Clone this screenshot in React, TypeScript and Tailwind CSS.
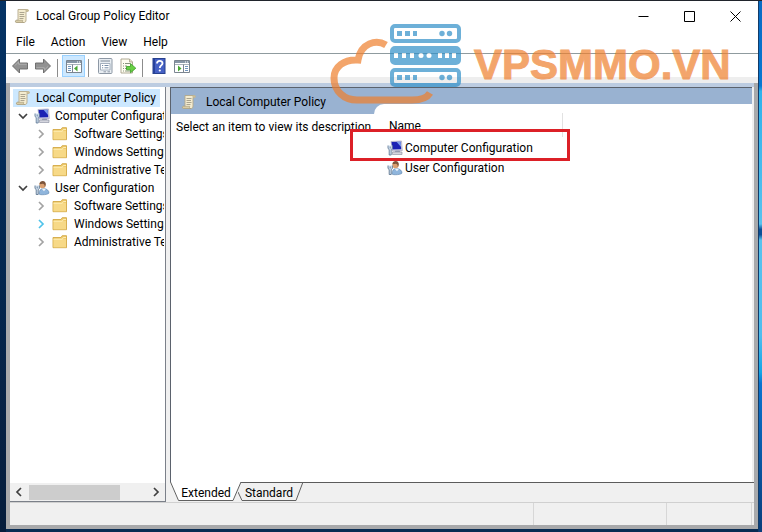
import { useState } from 'react';
import type { ReactNode } from 'react';

interface TreeGroup {
  name: string;
  kind: 'computer' | 'user';
  children: string[];
}

const folders = ['Software Settings', 'Windows Settings', 'Administrative Templates'];

const groups: TreeGroup[] = [
  { name: 'Computer Configuration', kind: 'computer', children: folders },
  { name: 'User Configuration', kind: 'user', children: folders },
];

function ScrollIcon() {
  return (
    <svg className="size-4 shrink-0" viewBox="0 0 16 16" aria-hidden="true">
      <path d="M4 1.500h9.500c1.200 0 1.400 2 0 2H12V12c0 1.800-.8 2.500-2 2.500H2.500c-1.300 0-1.500-2 0-2.200H4z" fill="#f4ecd0" stroke="#b3a88a" strokeWidth=".9" />
      <path d="M12 3.500c-.8-.2-.8-1.600 0-2h1.500c1.200 0 1.400 2 0 2z" fill="#c9bd97" />
      <path d="M2.500 12.300h6.300c-.7.800-.3 2 .7 2.200h-7c-1.200 0-1.500-2 0-2.200z" fill="#d9cda8" stroke="#a59a7c" strokeWidth=".6" />
      <path d="M5.500 4.500h5M5.500 6.500h4.500M5.500 8.500h5M5.500 10.500h4" stroke="#a39c88" strokeWidth=".9" />
    </svg>
  );
}

function FolderIcon() {
  return (
    <svg className="size-4 shrink-0" viewBox="0 0 16 16" aria-hidden="true">
      <path d="M1 3.500h8l1.200-1.800h4.300v12H1z" fill="#efcb6b" stroke="#d3a846" strokeWidth=".9" />
      <path d="M1.500 5h12.500v8.300H1.500z" fill="#f7d987" />
      <path d="M1.500 5.200h8.800l1-1.700h2.700" fill="none" stroke="#fff0bd" strokeWidth=".9" />
    </svg>
  );
}

function ComputerIcon() {
  return (
    <svg className="size-4 shrink-0" viewBox="0 0 16 16" aria-hidden="true">
      <path d="M4 1.500l10.500-.5.8 9.500L5.500 11z" fill="#dcdcea" stroke="#a3a3bd" strokeWidth=".7" />
      <path d="M4.500 2l9.200-.3.500 7.600L5.500 9.500z" fill="#1a22b4" />
      <path d="M9.500 1.800l4.200-.1.400 5.300z" fill="#7b9bea" />
      <path d="M8.500 10.500h4l1 1.700H7.500z" fill="#9ba0b8" />
      <path d="M5.500 12h9.500v2.500H5.500z" fill="#d5d6df" stroke="#85899c" strokeWidth=".6" />
      <path d="M1 5.500v3l1.200 1v5.500h2V9.500l1.200-1v-3M3.200 6.500v2" fill="#d4e2f1" stroke="#55718f" strokeWidth=".8" />
    </svg>
  );
}

function UserIcon() {
  return (
    <svg className="size-4 shrink-0" viewBox="0 0 16 16" aria-hidden="true">
      <path d="M5 14c0-3.500 1.500-5.500 4.500-5.500S15 10.500 15 13c0 1.500-9 2.500-10 1z" fill="#8fb5dc" stroke="#5d83ab" strokeWidth=".6" />
      <path d="M7.500 8.500l2.500 2.800 2-2.500z" fill="#eef4fa" />
      <circle cx="8.500" cy="5" r="3.200" fill="#dba070" />
      <path d="M5.500 4.200C5.500 2 7 1 8.700 1c2 0 3.300 1.500 3 4l-1 2.200c.2-2-.4-3-1.700-3.400z" fill="#7c543a" />
      <path d="M1 5.500v3l1.200 1v5h2v-5l1.200-1v-3M3.200 6.500v2" fill="#d4e2f1" stroke="#4d6884" strokeWidth=".8" />
    </svg>
  );
}

function Chevron({ dir, className }: { dir: 'down' | 'left' | 'right'; className: string }) {
  const paths = { down: 'M2 4l4 4 4-4', left: 'M8 2L4 6l4 4', right: 'M4 2l4 4-4 4' };
  return (
    <svg className={`size-3 ${className}`} viewBox="0 0 12 12" fill="none" stroke="currentColor" aria-hidden="true">
      <path d={paths[dir]} strokeWidth="1.700" />
    </svg>
  );
}

function ArrowIcon({ flip }: { flip?: boolean }) {
  return (
    <svg className={flip ? 'size-4 rotate-180' : 'size-4'} viewBox="0 0 16 16" aria-hidden="true">
      <path d="M.5 8L7.500 1v4h8v6h-8v4z" fill="#929292" stroke="#666" strokeWidth=".9" />
      <path d="M3 7.500L6.700 3.800v2.400h8" fill="none" stroke="#b9b9b9" strokeWidth=".8" />
    </svg>
  );
}

function PaneIcon({ side }: { side: 'left' | 'right' }) {
  return (
    <svg className="size-4" viewBox="0 0 16 16" aria-hidden="true">
      <path d="M.5 2.500h15v12H.5z" fill="#fff" stroke="#7b8590" />
      <path d="M1 3h14v2H1z" fill="#8796a6" />
      <path d="M11 4h1M13 4h1" stroke="#fff" />
      <path d="M1 6.500h14" stroke="#aab3bc" />
      {side === 'left' ? (
        <>
          <path d="M6.500 6.500v8" stroke="#7b8590" />
          <path d="M2 8.500h3M2 10.500h3M2 12.500h3" stroke="#7195bd" />
          <path d="M11.500 7.500v6L8 10.500z" fill="#49a832" />
        </>
      ) : (
        <>
          <path d="M9.500 6.500v8" stroke="#7b8590" />
          <path d="M11 8.500h3M11 10.500h3M11 12.500h3" stroke="#7195bd" />
          <path d="M4 7.500v6l3.500-3z" fill="#49a832" />
        </>
      )}
    </svg>
  );
}

function PropertiesIcon() {
  return (
    <svg className="size-4" viewBox="0 0 16 16" aria-hidden="true">
      <rect x="1.500" y=".5" width="13.500" height="15" rx="1" fill="#e8edf2" stroke="#8d98a5" />
      <path d="M3.500 3h9.500" stroke="#7c8896" />
      <path d="M3.500 5.500h9.500v6.500H3.500z" fill="#fff" stroke="#91a0b0" strokeWidth=".8" />
      <path d="M5 7.500h1.200M7.500 7.500h4M5 9.800h1.200M7.500 9.800h4" stroke="#768ca6" />
      <path d="M6.500 13.800h2.500M10.500 13.800h2.500" stroke="#8d98a5" />
    </svg>
  );
}

function ExportIcon() {
  return (
    <svg className="size-4" viewBox="0 0 16 16" aria-hidden="true">
      <path d="M1 1h8.500l3 3v11H1z" fill="#fffdf0" stroke="#a7a28a" strokeWidth=".9" />
      <path d="M9.500 1v3h3" fill="#e4dfc6" stroke="#a7a28a" strokeWidth=".8" />
      <path d="M3 5.500h1M5 5.500h5M3 8h1M5 8h2M3 10.500h1M5 10.500h2M3 13h1M5 13h5" stroke="#7c8a72" strokeWidth=".9" />
      <path d="M6.500 8.500h4V5.500L15.800 10.200l-5.300 4.600v-3h-4z" fill="#68cf43" stroke="#399c24" strokeWidth=".8" />
    </svg>
  );
}

function HelpIcon() {
  return (
    <svg className="size-4" viewBox="0 0 16 16" aria-hidden="true">
      <rect x="2" y=".5" width="12" height="15" fill="#4560c4" stroke="#27418e" />
      <path d="M2 1h2v14H2z" fill="#28429b" />
      <path d="M6 5.500c0-3.500 5.500-3.300 5.500-.3 0 2.300-2.700 2.200-2.700 4.800" fill="none" stroke="#fff" strokeWidth="1.800" />
      <circle cx="8.800" cy="12.500" r="1.100" fill="#fff" />
    </svg>
  );
}

function ToolButton({ label, active, children }: { label: string; active?: boolean; children: ReactNode }) {
  return (
    <button
      aria-label={label}
      className={`flex h-[22px] w-[23px] items-center justify-center border ${active ? 'border-[#99d1ff] bg-[#cce8ff]' : 'border-transparent'}`}
    >
      {children}
    </button>
  );
}

function Separator() {
  return <div className="mr-1 ml-[3px] h-[18px] w-px bg-[#8c8c8c]" />;
}

function TitleBar() {
  return (
    <header className="flex h-[30px] shrink-0 items-center bg-white pl-2">
      <ScrollIcon />
      <h1 className="ml-1.5 flex-1">Local Group Policy Editor</h1>
      <button aria-label="Minimize" className="flex h-7 w-[46px] items-center justify-center">
        <svg className="size-[11px]" viewBox="0 0 11 11"><path d="M.5 5.500h10" stroke="#000" /></svg>
      </button>
      <button aria-label="Maximize" className="flex h-7 w-[46px] items-center justify-center">
        <svg className="size-[11px]" viewBox="0 0 11 11"><path d="M.5 .5h10v10H.5z" fill="none" stroke="#000" /></svg>
      </button>
      <button aria-label="Close" className="flex h-7 w-[46px] items-center justify-center">
        <svg className="size-[11px]" viewBox="0 0 11 11"><path d="M.5 .5l10 10M10.500 .5l-10 10" stroke="#000" /></svg>
      </button>
    </header>
  );
}

function Tree() {
  const [open, setOpen] = useState<Record<string, boolean>>({ computer: true, user: true });

  return (
    <nav className="flex w-[156px] shrink-0 flex-col border-r border-b border-[#7b8089] bg-white">
      <ul className="mr-px flex-1 overflow-hidden pt-0.5 whitespace-nowrap">
        <li>
          <a href="#policy" className="mr-1 ml-[3px] flex h-[18px] items-center gap-[5px] bg-[#cce8ff] pl-0.5">
            <ScrollIcon />
            Local Computer Policy
          </a>
          <ul>
            {groups.map((group) => (
              <li key={group.kind}>
                <div className="flex h-[18px] items-center pl-[7px]">
                  <button
                    aria-label={`Toggle ${group.name}`}
                    className="mr-[5px]"
                    onClick={() => setOpen({ ...open, [group.kind]: !open[group.kind] })}
                  >
                    <Chevron dir="down" className="text-[#404040]" />
                  </button>
                  {group.kind === 'computer' ? <ComputerIcon /> : <UserIcon />}
                  <a href={`#${group.kind}`} className="ml-[5px]">{group.name}</a>
                </div>
                {open[group.kind] && (
                  <ul>
                    {group.children.map((child, i) => (
                      <li key={child} className="flex h-[18px] items-center pl-[25px]">
                        <button aria-label={`Expand ${child}`} className="mr-[5px]">
                          <Chevron
                            dir="right"
                            className={group.kind === 'user' && i === 1 ? 'text-[#4fc3ea]' : 'text-[#a3a3a3]'}
                          />
                        </button>
                        <FolderIcon />
                        <a href={`#${group.kind}-${i}`} className="ml-[6px]">{child}</a>
                      </li>
                    ))}
                  </ul>
                )}
              </li>
            ))}
          </ul>
        </li>
      </ul>
      <div className="flex h-[18px] items-center bg-[#f0f0f0] px-[3px]">
        <button aria-label="Scroll left"><Chevron dir="left" className="text-[#404040]" /></button>
        <div className="flex-1 px-1"><div className="h-[15px] w-[91px] bg-[#cdcdcd]" /></div>
        <button aria-label="Scroll right"><Chevron dir="right" className="text-[#404040]" /></button>
      </div>
    </nav>
  );
}

function Details() {
  return (
    <main className="flex min-w-0 flex-1 flex-col">
      <div className="flex flex-1 border-t border-l border-[#5b626d] bg-[#99b2d1]">
        <section className="flex w-[203px] shrink-0 flex-col">
          <h2 className="flex h-[26px] items-center gap-[9px] pt-0.5 pl-[10px]">
            <ScrollIcon />
            Local Computer Policy
          </h2>
          <p className="flex-1 bg-white pt-[5px] pl-[5px] whitespace-nowrap">Select an item to view its description.</p>
        </section>
        <section className="flex min-w-0 flex-1 flex-col pt-4">
          <div className="flex-1 rounded-tl-[10px] bg-white pt-[9px]">
            <table className="text-left">
              <thead>
                <tr>
                  <th className="h-6 w-[188px] border-r border-[#e2e2e2] pt-0.5 pl-[15px] font-normal">Name</th>
                </tr>
              </thead>
              <tbody>
                {groups.map((group) => (
                  <tr key={group.kind}>
                    <td className="h-5 pt-px pl-[13px]">
                      <a href={`#${group.kind}`} className="flex items-center gap-[2px]">
                        {group.kind === 'computer' ? <ComputerIcon /> : <UserIcon />}
                        {group.name}
                      </a>
                    </td>
                  </tr>
                ))}
              </tbody>
            </table>
          </div>
        </section>
      </div>
      <div className="-mr-0.5 flex h-5 border-t border-[#5b5b5b]" role="tablist">
        <button role="tab" aria-selected="true" className="relative w-[72px]">
          <svg className="absolute -top-px left-0 h-5 w-[72px]" viewBox="0 0 72 20" aria-hidden="true">
            <path d="M0 0l8 18.500h55L71 0z" fill="#fff" />
            <path d="M.5 0l8 18.500h54.500L71 0" fill="none" stroke="#606060" />
          </svg>
          <span className="relative">Extended</span>
        </button>
        <button role="tab" aria-selected="false" className="relative w-[62px] pr-2">
          <svg className="absolute -top-px -left-1 h-5 w-[66px]" viewBox="0 0 66 20" aria-hidden="true">
            <path d="M0 10l4 8.500h54L65 0" fill="none" stroke="#606060" />
          </svg>
          <span className="relative">Standard</span>
        </button>
      </div>
    </main>
  );
}

function Watermark() {
  return (
    <div className="pointer-events-none absolute top-[21px] left-[330px] flex opacity-70" aria-hidden="true">
      <svg className="h-[82px] w-[136px]" viewBox="0 0 136 82">
        <path
          d="M56 23C46 17 31 21 28 38C14 37 4 45 4 56C4 69 14 78 27 78H82C91 78 97 76 100 71"
          fill="none"
          stroke="#ef7f2d"
          strokeWidth="7"
        />
        {[4, 26, 48].map((y) => (
          <rect key={y} x="62" y={y} width="67" height="15" rx="3" fill={y === 26 ? '#3090c8' : 'none'} stroke="#3090c8" strokeWidth="4" />
        ))}
        {[4, 48].map((y) => (
          <g key={y} fill="#3090c8">
            <path d={`M67 ${y + 5}h5v5h-5zM75 ${y + 5}h5v5h-5zM83 ${y + 5}h4v5h-4z`} />
            <circle cx="112" cy={y + 7.5} r="2.700" />
            <circle cx="119.500" cy={y + 7.5} r="2.700" />
          </g>
        ))}
        <g fill="#fff">
          <path d="M64 31h4v5h-4zM72 31h4v5h-4zM80 31h4v5h-4zM108 31h4v5h-4zM115 31h4v5h-4zM122 31h4v5h-4z" />
          <circle cx="91" cy="33.500" r="2.500" />
          <circle cx="99" cy="33.500" r="2.500" />
        </g>
      </svg>
      <span className="ml-2 pt-[22px] font-['Liberation_Sans',sans-serif] text-[42px] leading-[42px] font-bold text-[#ef7f2d] [-webkit-text-stroke:1px_#ef7f2d]">
        VPSMMO.VN
      </span>
    </div>
  );
}

export default function App() {
  return (
    <div className="relative flex h-screen min-h-[300px] overflow-hidden border-t border-[#20242c] bg-[#082b52] font-['Roboto','Open_Sans',sans-serif] text-[12px] leading-4 text-black">
      <div className="w-1.5 shrink-0 bg-linear-to-b from-[#053365] to-[#051d3c]" />
      <div className="flex min-w-0 flex-1 flex-col pb-[3px]">
        <TitleBar />
        <div className="flex h-[23px] shrink-0 items-start gap-4 border-b border-[#8f9b9f] bg-white pt-[3px] pl-[10px]">
          <button>File</button>
          <button>Action</button>
          <button>View</button>
          <button>Help</button>
        </div>
        <div className="flex h-[23px] shrink-0 items-end bg-white pl-0.5">
          <ToolButton label="Back"><ArrowIcon /></ToolButton>
          <ToolButton label="Forward"><ArrowIcon flip /></ToolButton>
          <Separator />
          <ToolButton label="Show/Hide Console Tree" active><PaneIcon side="left" /></ToolButton>
          <Separator />
          <ToolButton label="Properties"><PropertiesIcon /></ToolButton>
          <ToolButton label="Export List"><ExportIcon /></ToolButton>
          <Separator />
          <ToolButton label="Help"><HelpIcon /></ToolButton>
          <ToolButton label="Show/Hide Action Pane"><PaneIcon side="right" /></ToolButton>
        </div>
        <div className="h-1.5 shrink-0 bg-[#eeeeee]" />
        <div className="flex min-h-0 flex-1 flex-col border-x-4 border-b-4 border-[#a8a9ab] bg-[#f0f0f0]">
          <div className="h-1 shrink-0 bg-[#bccce1]" />
          <div className="flex min-h-0 flex-1 gap-1 pr-0.5">
            <Tree />
            <Details />
          </div>
          <footer className="flex h-[23px] shrink-0 border-t border-[#d0d0d0]">
            <div className="flex-1 border-r border-[#d7d7d7]" />
            <div className="w-[133px] border-r border-[#d7d7d7]" />
            <div className="mr-0.5 w-[85px] border-r border-[#d7d7d7]" />
          </footer>
        </div>
      </div>
      <div className="w-1 shrink-0 border-l border-[#123b68] bg-[linear-gradient(#0a6cc4_0%,#0878d1_16%,#2fb2ec_17%,#58c2ee_42%,#0b4f96_43%,#0b4f96_44%,#58c2ee_45%,#4fbdee_63%,#14a5e6_70%,#0a74d0_72%,#0a3d7a_100%)]" />
      <div className="pointer-events-none absolute top-32 left-[350px] h-8 w-[220px] border-3 border-[#dc2027]" />
      <Watermark />
    </div>
  );
}
